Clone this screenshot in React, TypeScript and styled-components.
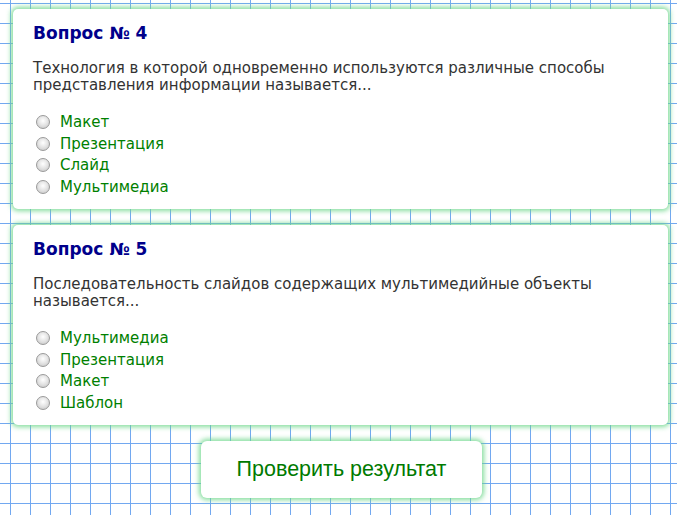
import React from "react";
import styled, { createGlobalStyle } from "styled-components";

const Global = createGlobalStyle`
  html, body {
    margin: 0;
    padding: 0;
  }
  body {
    min-height: 100vh;
    background-color: #ffffff;
    background-image:
      linear-gradient(to right, #72a8f0 1px, transparent 1px),
      linear-gradient(to bottom, #72a8f0 1px, transparent 1px);
    background-size: 20px 20px;
    background-position: 10px 3px;
    font-family: "DejaVu Sans", Verdana, sans-serif;
  }
`;

const Page = styled.div`
  display: flex;
  flex-direction: column;
  align-items: stretch;
  gap: 16px;
  width: 655px;
  padding: 9px 0 0 13px;
`;

const Card = styled.section`
  background: #ffffff;
  border-radius: 5px;
  box-shadow: 0 0 5px 2px rgba(110, 215, 140, 0.85);
  padding: 14px 20px 13px 20px;
  height: 200px;
  box-sizing: border-box;
`;

const Title = styled.h2`
  margin: 0;
  font-size: 17px;
  font-weight: bold;
  color: #00008b;
  line-height: 20px;
`;

const Question = styled.p`
  margin: 17px 0 19px 0;
  font-size: 15px;
  line-height: 17px;
  color: #333333;
`;

const Options = styled.div`
  display: flex;
  flex-direction: column;
  gap: 3px;
  padding-left: 3px;
`;

const Option = styled.label`
  display: flex;
  align-items: center;
  gap: 10px;
  height: 18.5px;
  font-size: 15px;
  color: #008000;
  cursor: pointer;
`;

const Radio = styled.input`
  appearance: none;
  margin: 0;
  width: 14px;
  height: 14px;
  border-radius: 50%;
  border: 1px solid #9a9a9a;
  box-sizing: border-box;
  background: radial-gradient(circle at 50% 40%, #ffffff 0%, #e6e6e6 45%, #c2c2c2 100%);
  flex: none;
  &:checked {
    background: radial-gradient(circle, #2d6a2d 0 3px, #f2f2f2 3.5px);
  }
`;

const ButtonRow = styled.div`
  display: flex;
  justify-content: center;
  padding-left: 2px;
`;

const CheckButton = styled.button`
  width: 281px;
  height: 57px;
  background: #ffffff;
  border: none;
  border-radius: 6px;
  box-shadow: 0 0 5px 2px rgba(110, 215, 140, 0.85);
  font-family: "Liberation Sans", Arial, sans-serif;
  font-size: 21.5px;
  color: #007a00;
  cursor: pointer;
  padding: 0;
`;

type Q = { n: number; text: string; options: string[] };

const questions: Q[] = [
  {
    n: 4,
    text: "Технология в которой одновременно используются различные способы представления информации называется...",
    options: ["Макет", "Презентация", "Слайд", "Мультимедиа"],
  },
  {
    n: 5,
    text: "Последовательность слайдов содержащих мультимедийные объекты называется...",
    options: ["Мультимедиа", "Презентация", "Макет", "Шаблон"],
  },
];

export default function App() {
  return (
    <>
      <Global />
      <Page>
        {questions.map((q) => (
          <Card key={q.n}>
            <Title>Вопрос № {q.n}</Title>
            <Question>{q.text}</Question>
            <Options>
              {q.options.map((o) => (
                <Option key={o}>
                  <Radio type="radio" name={`q${q.n}`} />
                  {o}
                </Option>
              ))}
            </Options>
          </Card>
        ))}
        <ButtonRow>
          <CheckButton>Проверить результат</CheckButton>
        </ButtonRow>
      </Page>
    </>
  );
}
